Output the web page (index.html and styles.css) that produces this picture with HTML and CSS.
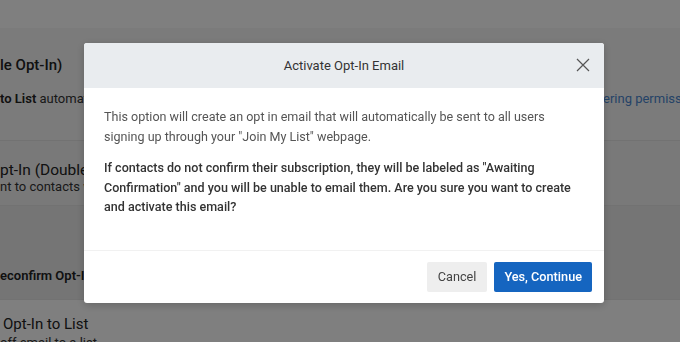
FILE: index.html
```html
<!DOCTYPE html>
<html lang="en">
<head>
    <meta charset="UTF-8">
    <meta name="viewport" content="width=device-width, initial-scale=1.0">
    <title>Opt-In Settings</title>
    <link rel="stylesheet" href="styles.css">
</head>
<body>
    <div class="page">
        <div class="section section-top"></div>

        <div class="section section-single">
            <h2 class="option-title bold">le Opt-In)</h2>
            <div class="option-row">
                <p class="option-desc"><strong>to List</strong> automat</p>
                <a href="#" class="option-link">ering permission</a>
            </div>
        </div>

        <div class="section section-double">
            <h2 class="option-title">pt-In (Double</h2>
            <p class="option-desc">nt to contacts w</p>
        </div>

        <div class="section section-reconfirm">
            <h3 class="option-sub">econfirm Opt-In</h3>
        </div>

        <div class="section section-list">
            <h2 class="option-title">Opt-In to List</h2>
            <p class="option-desc">off email to a list</p>
        </div>
    </div>

    <div class="overlay">
        <div class="modal">
            <div class="modal-header">
                <span class="modal-title">Activate Opt-In Email</span>
                <button class="modal-close" aria-label="Close">
                    <svg width="14" height="14" viewBox="0 0 14 14">
                        <path d="M1 1 L13 13 M13 1 L1 13" stroke="#555" stroke-width="1.2" fill="none"/>
                    </svg>
                </button>
            </div>
            <div class="modal-body">
                <p class="info">This option will create an opt in email that will automatically be sent to all users signing up through your "Join My List" webpage.</p>
                <p class="warning">If contacts do not confirm their subscription, they will be labeled as "Awaiting Confirmation" and you will be unable to email them. Are you sure you want to create and activate this email?</p>
            </div>
            <div class="modal-footer">
                <button class="btn btn-cancel">Cancel</button>
                <button class="btn btn-primary">Yes, Continue</button>
            </div>
        </div>
    </div>
</body>
</html>
```

FILE: styles.css
```css
* {
    margin: 0;
    padding: 0;
    box-sizing: border-box;
    font-family: Roboto, 'Liberation Sans', sans-serif;
}

html, body {
    height: 100%;
    overflow: hidden;
}

body {
    background: #fff;
    color: #222;
}

.page {
    width: 680px;
}

.section {
    border-bottom: 1px solid #e4e4e4;
}

.section-top {
    height: 28px;
    background: #fff;
    border-bottom: none;
}

.section-single {
    height: 113px;
    background: #f7f7f7;
    padding-top: 27px;
}

.section-double {
    height: 65px;
    background: #f2f2f2;
    padding-top: 21px;
}

.section-reconfirm {
    height: 94px;
    background: #ebebeb;
    padding-top: 62px;
}

.section-list {
    background: #fff;
    padding-top: 16px;
    border-bottom: none;
}

.option-title {
    font-size: 15.5px;
    font-weight: 400;
    color: #222;
    line-height: 17px;
}

.option-title.bold {
    font-weight: 500;
    font-size: 15px;
    line-height: 20px;
}

.option-row {
    display: flex;
    margin-top: 16px;
}

.option-desc {
    font-size: 13px;
    line-height: 15px;
    color: #333;
    white-space: nowrap;
}

.option-row .option-desc {
    flex: 0 0 603px;
    overflow: hidden;
}

.option-desc strong {
    font-weight: 600;
    color: #222;
}

.option-link {
    font-size: 13px;
    line-height: 15px;
    color: #4a86cf;
    text-decoration: none;
    white-space: nowrap;
}

.option-sub {
    font-size: 13px;
    font-weight: 600;
    color: #222;
}

.section-list .option-desc {
    margin-top: 2px;
}

.section-list .option-title {
    padding-left: 3px;
    font-size: 15px;
}

/* modal */
.overlay {
    position: fixed;
    inset: 0;
    background: rgba(0, 0, 0, 0.5);
    display: flex;
    align-items: flex-start;
    padding: 43px 0 0 84px;
}

.modal {
    width: 520px;
    background: #fff;
    border-radius: 3px;
    overflow: hidden;
    box-shadow: 0 2px 8px rgba(0, 0, 0, 0.2);
}

.modal-header {
    height: 45px;
    background: #e9ecef;
    display: flex;
    align-items: center;
    justify-content: center;
    position: relative;
}

.modal-title {
    font-size: 13px;
    color: #333;
}

.modal-close {
    position: absolute;
    right: 14px;
    top: 15px;
    width: 14px;
    height: 14px;
    border: none;
    background: none;
    cursor: pointer;
}

.modal-close svg {
    display: block;
}

.modal-body {
    padding: 19px 20px 33px;
    font-size: 12.55px;
    line-height: 19.5px;
}

.info {
    color: #555;
}

.warning {
    margin-top: 12px;
    color: #333;
    font-weight: 500;
}

.modal-footer {
    border-top: 1px solid #f1f1f1;
    display: flex;
    justify-content: flex-end;
    gap: 7px;
    padding: 11px 12px 11px;
}

.btn {
    height: 30px;
    border: none;
    border-radius: 2px;
    font-size: 12.7px;
    cursor: pointer;
    padding: 0 11px;
}

.btn-cancel {
    background: #eeeeee;
    color: #444;
}

.btn-primary {
    background: #1565c0;
    color: #fff;
    font-weight: 500;
    padding: 0 10px;
}
```
